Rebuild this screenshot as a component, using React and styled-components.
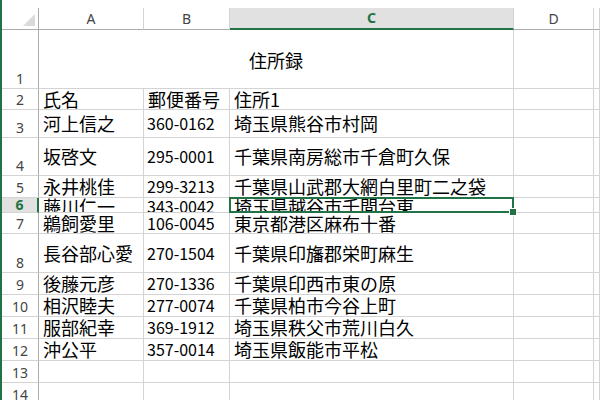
import React from 'react'
import styled, { createGlobalStyle, css } from 'styled-components'

const GlobalStyle = createGlobalStyle`
    html, body {
        margin: 0;
        padding: 0;
        background: #ffffff;
        width: 600px;
        height: 400px;
        overflow: hidden;
    }
`;

const green = '#217346';
const grid = '#d4d4d4';
const headLine = '#ababab';

const Sheet = styled.div`
    height: 400px;
    padding-top: 8px;
    box-sizing: border-box;
    border-left: 2px solid ${green};
    overflow: hidden;
`;

const Grid = styled.div`
    display: grid;
    grid-template-columns: 37px 105px 86px 284px 80px 1fr;
    grid-template-rows: ${p => p.rows.map(r => r + 'px').join(' ')};
`;

const Corner = styled.div`
    position: relative;
    border-right: 1px solid ${headLine};
    border-bottom: 1px solid ${headLine};
    box-sizing: border-box;
    background: #ffffff;
    &::after {
        content: '';
        position: absolute;
        right: 3px;
        bottom: 3px;
        width: 0;
        height: 0;
        border-left: 12px solid transparent;
        border-bottom: 12px solid #dadada;
    }
`;

const ColHead = styled.div`
    display: flex;
    align-items: center;
    justify-content: center;
    box-sizing: border-box;
    border-right: 1px solid ${grid};
    border-bottom: 1px solid ${headLine};
    font-family: "Noto Sans", "Open Sans", sans-serif;
    font-size: 14px;
    color: #444444;
    padding-bottom: 1px;
    ${p => p.active && css`
        background: #e1e1e1;
        color: ${green};
        font-weight: 700;
        border-bottom: 2px solid ${green};
    `}
`;

const RowHead = styled.div`
    display: flex;
    align-items: flex-end;
    justify-content: center;
    box-sizing: border-box;
    border-right: 1px solid ${headLine};
    border-bottom: 1px solid ${grid};
    font-family: "Noto Sans", "Open Sans", sans-serif;
    font-size: 14px;
    line-height: 18px;
    color: #444444;
    overflow: hidden;
    ${p => p.active && css`
        background: #e1e1e1;
        color: ${green};
        font-weight: 700;
        border-right: 2px solid ${green};
        line-height: 15px;
    `}
`;

const clipped = css`
    & > span {
        display: block;
        height: 14px;
        overflow: hidden;
        line-height: 17px;
    }
`;

const Cell = styled.div`
    position: relative;
    display: flex;
    align-items: center;
    box-sizing: border-box;
    border-right: 1px solid ${grid};
    border-bottom: 1px solid ${grid};
    padding-left: ${p => (p.num ? 3 : 4)}px;
    font-family: "Noto Sans CJK JP", "Noto Sans", sans-serif;
    font-size: ${p => (p.num ? 16 : 18)}px;
    line-height: 19px;
    color: #000000;
    white-space: nowrap;
    overflow: ${p => (p.selected ? 'visible' : 'hidden')};
    ${p => p.short && clipped}
    ${p => p.selected && css`
        z-index: 2;
        ${clipped}
        &::after {
            content: '';
            position: absolute;
            left: -1px;
            top: -1px;
            right: -1px;
            bottom: -1px;
            border: 2px solid ${green};
            pointer-events: none;
        }
        &::before {
            content: '';
            position: absolute;
            right: -4px;
            bottom: -4px;
            width: 6px;
            height: 6px;
            background: ${green};
            border: 1px solid #ffffff;
            z-index: 3;
        }
    `}
`;

const Title = styled(Cell)`
    grid-column: span 3;
    justify-content: center;
    padding-left: 0;
    padding-top: 2px;
`;

const rows = [
    ['氏名', '郵便番号', '住所1'],
    ['河上信之', '360-0162', '埼玉県熊谷市村岡'],
    ['坂啓文', '295-0001', '千葉県南房総市千倉町久保'],
    ['永井桃佳', '299-3213', '千葉県山武郡大網白里町二之袋'],
    ['藤川仁一', '343-0042', '埼玉県越谷市千間台東'],
    ['鵜飼愛里', '106-0045', '東京都港区麻布十番'],
    ['長谷部心愛', '270-1504', '千葉県印旛郡栄町麻生'],
    ['後藤元彦', '270-1336', '千葉県印西市東の原'],
    ['相沢睦夫', '277-0074', '千葉県柏市今谷上町'],
    ['服部紀幸', '369-1912', '埼玉県秩父市荒川白久'],
    ['沖公平', '357-0014', '埼玉県飯能市平松'],
    ['', '', ''],
    ['', '', ''],
];

const heights = [22, 59, 21, 28, 38, 22, 15, 21, 39, 22, 22, 22, 22, 22, 22];

const App = () => {
    return (
        <>
            <GlobalStyle />
            <Sheet>
                <Grid rows={heights}>
                    <Corner />
                    <ColHead>A</ColHead>
                    <ColHead>B</ColHead>
                    <ColHead active>C</ColHead>
                    <ColHead>D</ColHead>
                    <ColHead />

                    <RowHead>1</RowHead>
                    <Title>住所録</Title>
                    <Cell />
                    <Cell />

                    {rows.map((r, i) => {
                        const n = i + 2
                        const sel = n === 6
                        return (
                            <React.Fragment key={n}>
                                <RowHead active={sel}>{n}</RowHead>
                                <Cell short={sel}><span>{r[0]}</span></Cell>
                                <Cell short={sel} num={i > 0}><span>{r[1]}</span></Cell>
                                <Cell selected={sel}><span>{r[2]}</span></Cell>
                                <Cell />
                                <Cell />
                            </React.Fragment>
                        )
                    })}
                </Grid>
            </Sheet>
        </>
    )
}

export default App
